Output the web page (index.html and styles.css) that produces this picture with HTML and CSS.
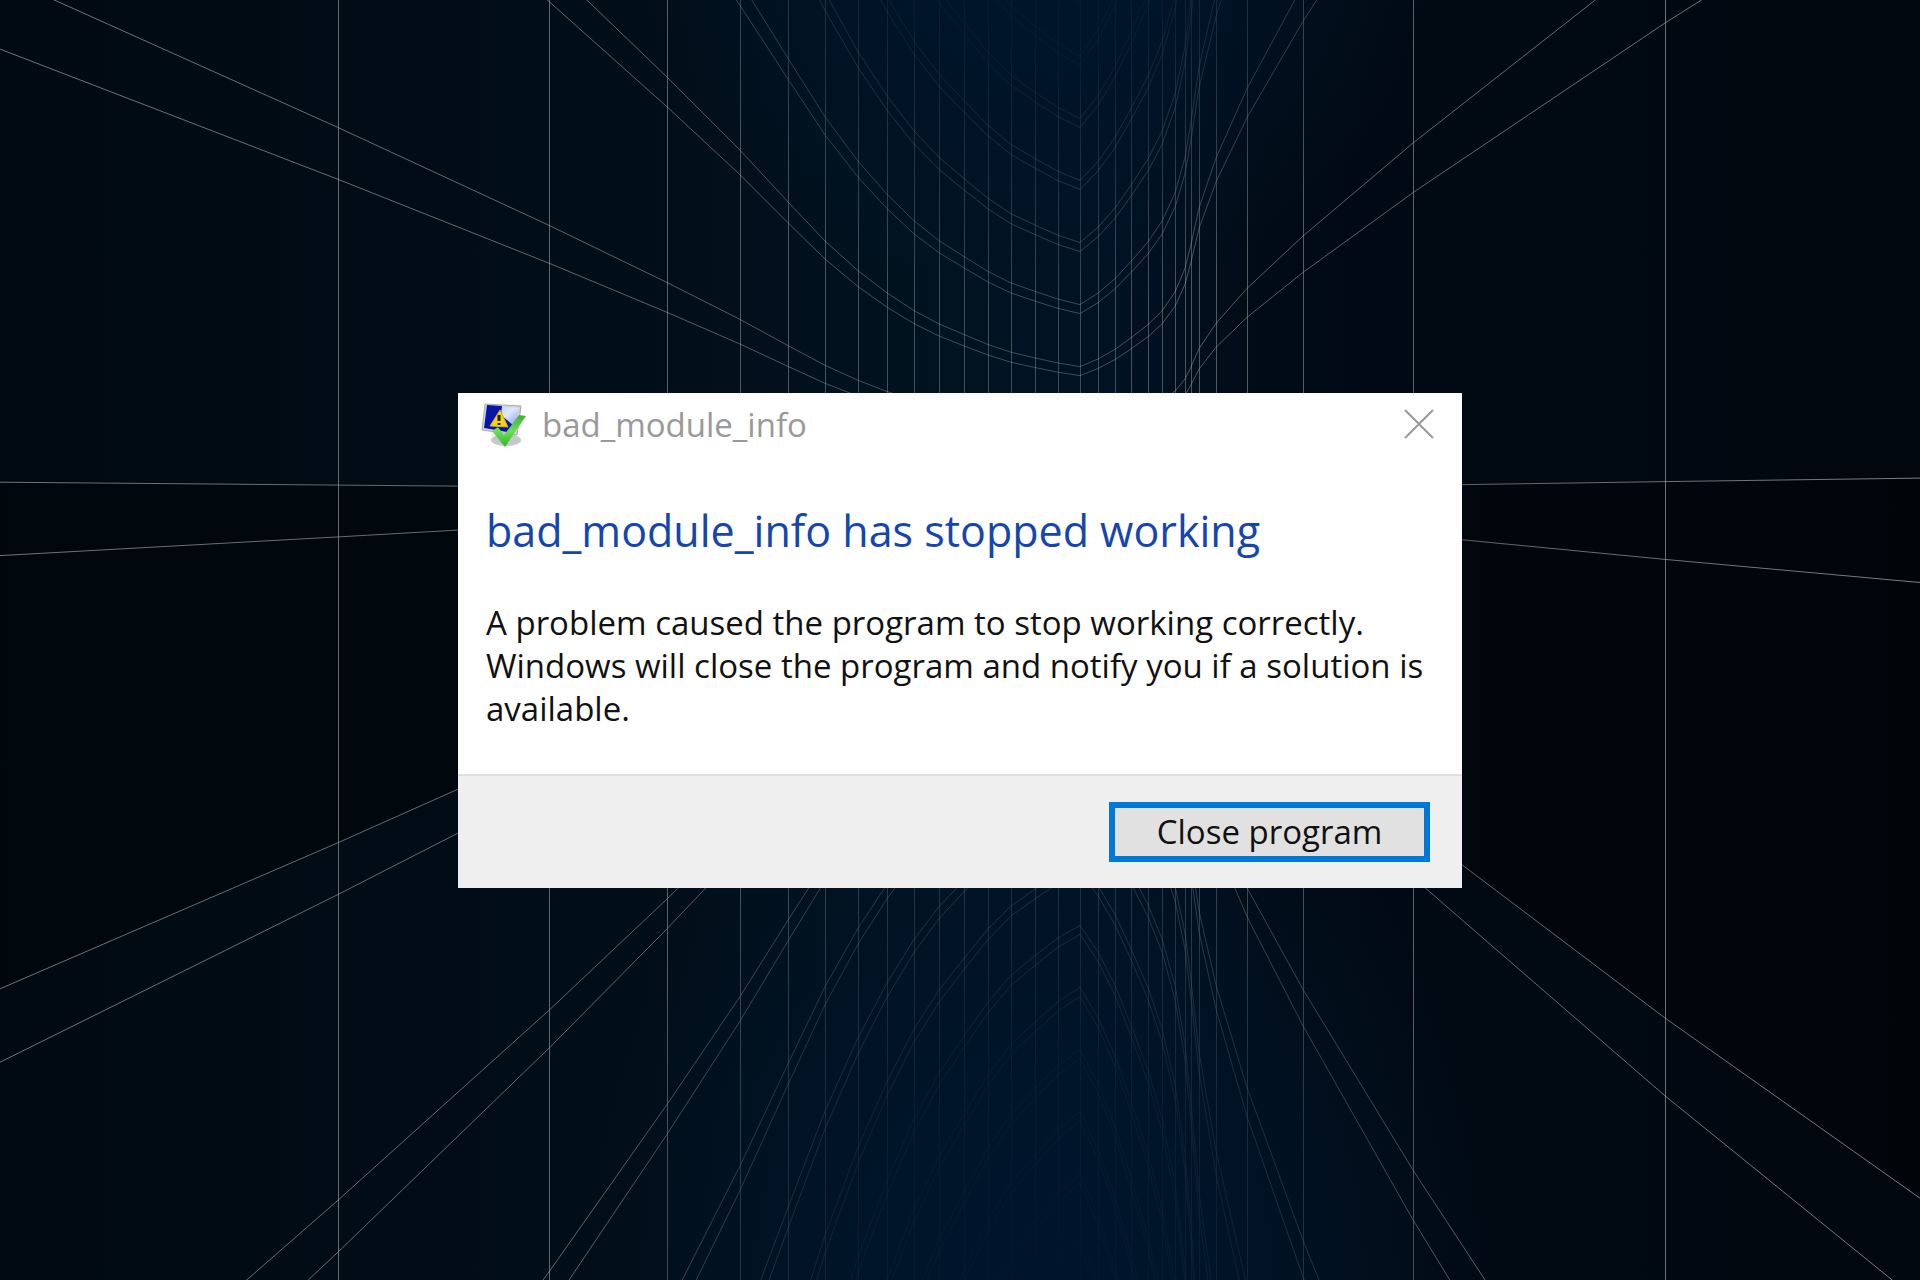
FILE: index.html
```
<!DOCTYPE html>
<html lang="en">

<head>
    <meta charset="UTF-8">
    <meta name="viewport" content="width=device-width, initial-scale=1.0">
    <title>bad_module_info</title>
    <link rel="stylesheet" href="styles.css">
</head>

<body>
    <svg class="wallpaper" viewBox="0 0 1920 1280" preserveAspectRatio="xMidYMid slice" aria-hidden="true">
        <defs>
            <linearGradient id="wall">
                <stop offset="0" stop-color="#010a13" />
                <stop offset=".3" stop-color="#010d17" />
                <stop offset=".47" stop-color="#01121f" />
                <stop offset=".58" stop-color="#011224" />
                <stop offset=".66" stop-color="#010b15" />
                <stop offset="1" stop-color="#01070f" />
            </linearGradient>
            <linearGradient id="ink" gradientUnits="userSpaceOnUse" x1="0" y1="0" x2="1920" y2="0">
                <stop offset="0" stop-color="#a3a6a8" stop-opacity=".68" />
                <stop offset=".3" stop-color="#a3a6a8" stop-opacity=".58" />
                <stop offset=".45" stop-color="#a3a6a8" stop-opacity=".42" />
                <stop offset=".56" stop-color="#a3a6a8" stop-opacity=".38" />
                <stop offset=".64" stop-color="#a3a6a8" stop-opacity=".5" />
                <stop offset="1" stop-color="#a3a6a8" stop-opacity=".75" />
            </linearGradient>
            <radialGradient id="glow">
                <stop offset="0" stop-color="#00152c" />
                <stop offset=".4" stop-color="#00152b" stop-opacity=".85" />
                <stop offset="1" stop-color="#001326" stop-opacity="0" />
            </radialGradient>
        </defs>
        <rect width="1920" height="1280" fill="url(#wall)" />
        <g id="bands"></g>
        <g id="lines"></g>
        <ellipse cx="1040" cy="-90" rx="400" ry="400" fill="url(#glow)" />
        <ellipse cx="1040" cy="1290" rx="460" ry="600" fill="url(#glow)" />
    </svg>

    <main class="dialog">
        <header class="titlebar">
            <svg class="app-icon" viewBox="0 0 48 48" aria-hidden="true">
                <defs>
                    <linearGradient id="screen" x1="0" y1="0" x2="1" y2="1">
                        <stop offset="0" stop-color="#a9bdf0" />
                        <stop offset=".5" stop-color="#dfe8fb" />
                        <stop offset="1" stop-color="#5a7be0" />
                    </linearGradient>
                    <linearGradient id="tick" x1="0" y1="0" x2="0" y2="1">
                        <stop offset="0" stop-color="#3fae35" />
                        <stop offset=".5" stop-color="#6be05a" />
                        <stop offset="1" stop-color="#2fb526" />
                    </linearGradient>
                </defs>
                <ellipse cx="26" cy="39" rx="15" ry="6" fill="#c8c8c8" />
                <path d="M5 3L41 5L37 34L2 29Z" fill="#d3d5da" stroke="#a9abb3" />
                <path d="M7 4L39 7L34 32L4 27Z" fill="url(#screen)" />
                <path d="M7 4L22 5L21 14L34 25L33 32L4 27Z" fill="#0714a8" />
                <path d="M20 9L28 26L10 25Z" fill="#f6d414" stroke="#d9a90c" />
                <path d="M19 14V20M19 22V24" stroke="#2b2508" stroke-width="3" />
                <path d="M12 30L18 26L24 34L39 14L46 15L25 46Z" fill="url(#tick)" />
            </svg>
            <span class="title">bad_module_info</span>
            <button class="close" type="button" aria-label="Close">
                <svg viewBox="0 0 30 30" aria-hidden="true">
                    <path d="M1 1L29 29M29 1L1 29" />
                </svg>
            </button>
        </header>
        <section class="content">
            <h1>bad_module_info has stopped working</h1>
            <p>A problem caused the program to stop working correctly.<br>
                Windows will close the program and notify you if a solution is<br>
                available.</p>
        </section>
        <footer class="actions">
            <button class="close-program" type="button">Close program</button>
        </footer>
    </main>

    <script src="wallpaper.js"></script>
</body>

</html>
```

FILE: styles.css
```
* {
    box-sizing: border-box;
}

body {
    margin: 0;
    min-height: 100vh;
    display: flex;
    align-items: center;
    justify-content: center;
    background-color: #010a13;
    color: #111;
    font-family: "Segoe UI", "Open Sans", "Noto Sans", sans-serif;
    font-size: 33px;
    line-height: 43px;
}

.wallpaper {
    position: fixed;
    inset: 0;
    width: 100%;
    height: 100%;
    z-index: -1;
}

#lines {
    fill: none;
    stroke: url(#ink);
}

#bands {
    fill: #000306;
    fill-opacity: .5;
}

.dialog {
    width: 1004px;
    max-width: 90%;
    background-color: #fff;
}

.titlebar {
    display: flex;
    align-items: center;
    padding: 8px 28px 0 22px;
}

.app-icon {
    width: 48px;
    height: 48px;
}

.title {
    flex: 1;
    padding-left: 14px;
    color: #999;
}

.close {
    align-self: flex-start;
    width: 30px;
    height: 30px;
    margin-top: 8px;
    padding: 0;
    border: 0;
    background: none;
}

.close svg {
    display: block;
    stroke: #999;
    stroke-width: 2;
}

.content {
    padding: 52px 28px 44px;
}

h1 {
    margin: 0 0 40px;
    color: #1546ad;
    font-size: 43px;
    font-weight: 400;
    line-height: 60px;
}

p {
    margin: 0;
    white-space: nowrap;
}

.actions {
    display: flex;
    justify-content: flex-end;
    padding: 26px 32px;
    border-top: 2px solid #dfdfdf;
    background-color: #efefef;
}

.close-program {
    width: 321px;
    height: 60px;
    padding: 0;
    border: 6px solid #0078d7;
    background-color: #e1e1e1;
    color: #111;
    font: inherit;
}
```

FILE: wallpaper.js
```
// x of every vertical seam, and how near the wall is there
const seams = [
    [0, 8.16], [338, 5.76], [549, 4.215], [667, 3.31], [740, 2.727], [788, 2.314],
    [825, 2.002], [858, 1.765], [887, 1.588], [914, 1.447], [939, 1.341], [964, 1.256],
    [988, 1.177], [1011, 1.115], [1035, 1.07], [1058, 1.029], [1080, 1], [1098, 1.061],
    [1115, 1.138], [1131, 1.23], [1148, 1.335], [1162, 1.445], [1175, 1.595],
    [1185, 1.785], [1191, 1.975], [1199, 2.265], [1216, 2.665], [1247, 3.218],
    [1303, 4.045], [1413, 5.515], [1665, 8.64], [1920, 11.6]
];
const horizon = 492;
const step = 62.08;
const ns = "http://www.w3.org/2000/svg";

function points(h) {
    return seams.map(([x, s]) => x + "," + (horizon + s * h).toFixed(1));
}

function add(parent, name, attrs) {
    const el = document.createElementNS(ns, name);
    for (const key in attrs) el.setAttribute(key, attrs[key]);
    document.getElementById(parent).appendChild(el);
}

for (let i = 1; i < seams.length - 1; i++) {
    const x = seams[i][0] + 0.5;
    add("lines", "line", { x1: x, y1: 0, x2: x, y2: 1280 });
}

// each floor is a pair of lines
for (let j = -8; j <= 12; j++) {
    const top = j * step - 1.2;
    add("lines", "polyline", { points: points(top).join(" ") });
    add("lines", "polyline", { points: points(top + 9).join(" ") });
}

add("bands", "polygon", { points: points(-1.2).concat(points(step - 1.2).reverse()).join(" ") });
```
